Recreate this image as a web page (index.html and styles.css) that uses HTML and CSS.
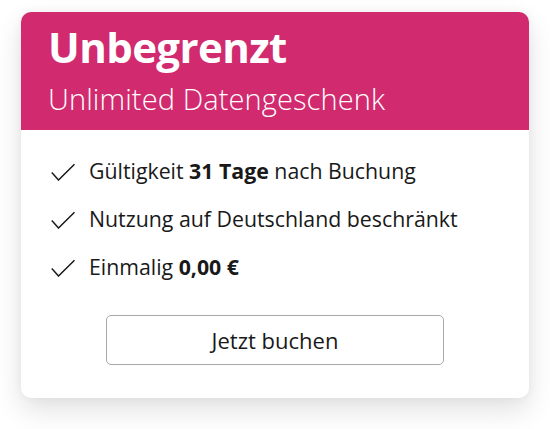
FILE: index.html
```html
<!DOCTYPE html>
<html lang="de">
<head>
<meta charset="utf-8">
<link rel="stylesheet" href="styles.css">
</head>
<body>
<div class="card">
  <div class="card-head">
    <h1 class="title">Unbegrenzt</h1>
    <p class="subtitle">Unlimited Datengeschenk</p>
  </div>
  <div class="card-body">
    <ul class="features">
      <li class="feature"><svg class="check" viewBox="0 0 24 18" width="24" height="18"><polyline points="0.8,9.5 7.5,17 23.5,1.2" fill="none" stroke="#191919" stroke-width="1.5"/></svg><span>Gültigkeit <b>31 Tage</b> nach Buchung</span></li>
      <li class="feature"><svg class="check" viewBox="0 0 24 18" width="24" height="18"><polyline points="0.8,9.5 7.5,17 23.5,1.2" fill="none" stroke="#191919" stroke-width="1.5"/></svg><span>Nutzung auf Deutschland beschränkt</span></li>
      <li class="feature"><svg class="check" viewBox="0 0 24 18" width="24" height="18"><polyline points="0.8,9.5 7.5,17 23.5,1.2" fill="none" stroke="#191919" stroke-width="1.5"/></svg><span>Einmalig <b>0,00 €</b></span></li>
    </ul>
    <button class="btn">Jetzt buchen</button>
  </div>
</div>
</body>
</html>
```
FILE: styles.css
```css
html, body {
  margin: 0;
  padding: 0;
  background: #ffffff;
}
body {
  min-height: 429px;
  box-sizing: border-box;
  padding: 12px 21px 0 21px;
  font-family: "Open Sans", "Liberation Sans", sans-serif;
  color: #191919;
}
.card {
  width: 508px;
  height: 386px;
  border-radius: 10px;
  background: #ffffff;
  overflow: hidden;
  box-shadow: 0 12px 28px rgba(0, 0, 0, 0.12), 0 0 10px rgba(0, 0, 0, 0.05);
  display: flex;
  flex-direction: column;
}
.card-head {
  background: #d12a6f;
  height: 118px;
  box-sizing: border-box;
  padding: 10px 0 0 27px;
  color: #ffffff;
}
.title {
  margin: 0;
  font-size: 42px;
  line-height: 50px;
  font-weight: 700;
  letter-spacing: -0.6px;
}
.subtitle {
  margin: 9px 0 0 0;
  font-size: 29px;
  line-height: 36px;
  font-weight: 300;
  letter-spacing: 0.1px;
}
.card-body {
  display: flex;
  flex-direction: column;
  align-items: center;
  padding: 16px 30px 0 30px;
}
.features {
  list-style: none;
  margin: 0;
  padding: 0;
  align-self: stretch;
}
.feature {
  display: flex;
  align-items: center;
  gap: 14px;
  height: 48px;
  font-size: 21.3px;
}
.feature b {
  font-weight: 700;
}
.check {
  flex: none;
  margin-top: 4px;
}
.btn {
  margin-top: 25px;
  width: 338px;
  height: 50px;
  border: 1px solid #a8a8a8;
  border-radius: 5px;
  background: #ffffff;
  font-family: "Open Sans", "Liberation Sans", sans-serif;
  font-size: 22px;
  color: #191919;
}
```
